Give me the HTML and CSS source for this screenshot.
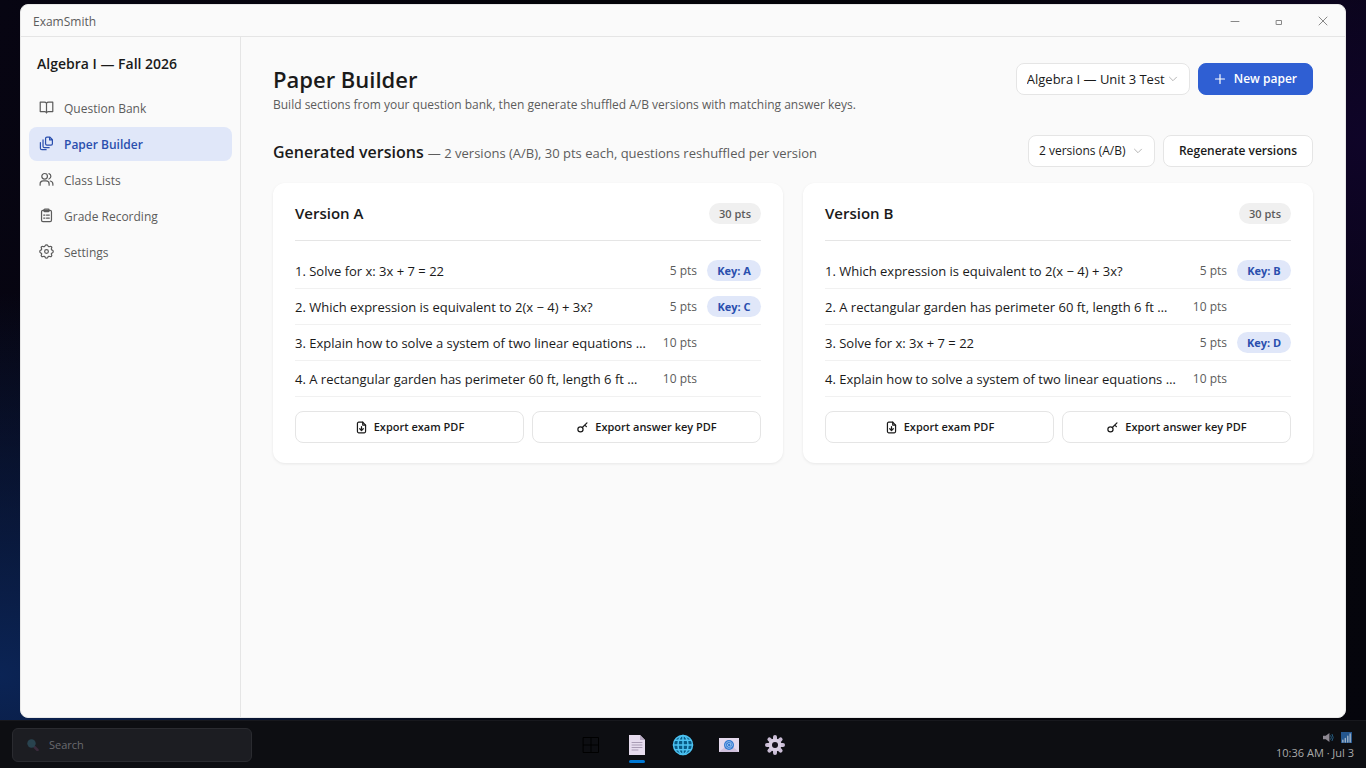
FILE: index.html
```html
<!DOCTYPE html>
<html lang="en">
<head>
<meta charset="utf-8">
<title>ExamSmith</title>
<link rel="stylesheet" href="styles.css">
</head>
<body class="desktop">
<svg class="sprite" aria-hidden="true">
  <symbol id="chevron" viewBox="0 0 10 10"><path d="M1.500 3.200 5 6.700l3.500-3.500"/></symbol>
  <symbol id="file-down" viewBox="0 0 16 16"><path d="M9.500 1.500h-5A1.500 1.500 0 0 0 3 3v10a1.500 1.500 0 0 0 1.500 1.500h7A1.500 1.500 0 0 0 13 13V5z"/><path d="M9.500 1.500V5H13M8 6.800v4.700M5.800 9.500 8 11.700l2.200-2.200"/></symbol>
  <symbol id="key" viewBox="0 0 16 16"><circle cx="5.500" cy="10.300" r="3.200"/><path d="M7.800 8 13.500 2.300M10.800 5l2 2"/></symbol>
</svg>
<div class="window">
  <header class="titlebar">
    <span class="titlebar-name">ExamSmith</span>
    <div class="titlebar-controls">
      <button class="win-button" type="button" aria-label="Minimize"><svg viewBox="0 0 12 12"><path d="M2 6.500h8"/></svg></button>
      <button class="win-button" type="button" aria-label="Maximize"><svg viewBox="0 0 12 12"><path d="M3.500 5.500h5v4h-5z"/></svg></button>
      <button class="win-button" type="button" aria-label="Close"><svg viewBox="0 0 12 12"><path d="m2 2 8 8M10 2l-8 8"/></svg></button>
    </div>
  </header>
  <div class="body">
    <nav class="sidebar" aria-label="Main">
      <div class="course">Algebra I — Fall 2026</div>
      <a class="nav-item" href="#"><svg viewBox="0 0 16 16"><path d="M8 3.500v10.300M8 3.500C7.500 2.700 6.700 2.300 5.700 2.300H1.300v10h4.900c.9 0 1.500.5 1.800 1.300.3-.8.900-1.300 1.800-1.300h4.900v-10h-4.400c-1 0-1.800.4-2.300 1.200z"/></svg>Question Bank</a>
      <a class="nav-item active" href="#" aria-current="page"><svg viewBox="0 0 16 16"><path d="M11.700 1.200H8.500c-.8 0-1.500.7-1.500 1.500v5.600c0 .8.700 1.500 1.500 1.500h4.300c.8 0 1.500-.7 1.500-1.500V3.800zM11.300 1.300v2.900h2.900M4.300 4.200v6.600c0 .9.700 1.600 1.600 1.600h4.900M1.500 7v6c0 .9.700 1.600 1.600 1.600h4.500"/></svg>Paper Builder</a>
      <a class="nav-item" href="#"><svg viewBox="0 0 16 16"><circle cx="6" cy="4.600" r="3"/><path d="M1.200 14v-1.300a3.300 3.300 0 0 1 3.300-3.300h3a3.300 3.300 0 0 1 3.300 3.300V14M10.600 1.800a3 3 0 0 1 0 5.700M12 9.600a3.300 3.300 0 0 1 2.800 3.200V14"/></svg>Class Lists</a>
      <a class="nav-item" href="#"><svg viewBox="0 0 16 16"><rect x="2.700" y="2.500" width="10.600" height="12" rx="1.500"/><rect x="5.300" y="1.200" width="5.400" height="2.700" rx=".8"/><path d="M5 7.500h1.300M5 10.700h1.300M8 7.500h3M8 10.700h3"/></svg>Grade Recording</a>
      <a class="nav-item" href="#"><svg viewBox="0 0 16 16"><path d="M6.600 1.800c.4-1.300 2.400-1.300 2.800 0 .3 1 1.300 1.300 2.200.9 1.300-.6 2.500.6 1.800 1.800-.5.900-.1 1.900.8 2.100 1.300.4 1.300 2.400 0 2.800-.9.200-1.300 1.200-.8 2.100.7 1.200-.5 2.400-1.800 1.800-.9-.4-1.900 0-2.200.9-.4 1.300-2.400 1.300-2.800 0-.3-.9-1.300-1.300-2.200-.9-1.300.6-2.500-.6-1.800-1.800.5-.9.100-1.900-.8-2.100-1.300-.4-1.300-2.400 0-2.800.9-.2 1.300-1.200.8-2.100-.7-1.200.5-2.400 1.800-1.800.9.400 1.900.1 2.200-.9z"/><circle cx="8" cy="8" r="2"/></svg>Settings</a>
    </nav>
    <main class="main">
      <div class="page-head">
        <div>
          <h1>Paper Builder</h1>
          <p class="subtitle">Build sections from your question bank, then generate shuffled A/B versions with matching answer keys.</p>
        </div>
        <div class="actions">
          <span class="select-wrap paper-select"><select aria-label="Paper"><option>Algebra I — Unit 3 Test</option></select><svg><use href="#chevron"/></svg></span>
          <button class="button primary" type="button"><svg viewBox="0 0 12 12"><path d="M6 1.500v9M1.500 6h9"/></svg>New paper</button>
        </div>
      </div>
      <div class="section-head">
        <h2>Generated versions <span class="section-note">— 2 versions (A/B), 30 pts each, questions reshuffled per version</span></h2>
        <div class="actions">
          <span class="select-wrap"><select aria-label="Number of versions"><option>2 versions (A/B)</option></select><svg><use href="#chevron"/></svg></span>
          <button class="button" type="button">Regenerate versions</button>
        </div>
      </div>
      <div class="cards">
        <section class="card">
          <div class="card-head"><h3>Version A</h3><span class="pill">30 pts</span></div>
          <ul class="questions">
            <li><span>1. Solve for x: 3x + 7 = 22</span><span class="pts">5 pts</span><span class="pill key">Key: A</span></li>
            <li><span>2. Which expression is equivalent to 2(x − 4) + 3x?</span><span class="pts">5 pts</span><span class="pill key">Key: C</span></li>
            <li><span>3. Explain how to solve a system of two linear equations …</span><span class="pts">10 pts</span></li>
            <li><span>4. A rectangular garden has perimeter 60 ft, length 6 ft …</span><span class="pts">10 pts</span></li>
          </ul>
          <div class="exports">
            <button class="button" type="button"><svg><use href="#file-down"/></svg>Export exam PDF</button>
            <button class="button" type="button"><svg><use href="#key"/></svg>Export answer key PDF</button>
          </div>
        </section>
        <section class="card">
          <div class="card-head"><h3>Version B</h3><span class="pill">30 pts</span></div>
          <ul class="questions">
            <li><span>1. Which expression is equivalent to 2(x − 4) + 3x?</span><span class="pts">5 pts</span><span class="pill key">Key: B</span></li>
            <li><span>2. A rectangular garden has perimeter 60 ft, length 6 ft …</span><span class="pts">10 pts</span></li>
            <li><span>3. Solve for x: 3x + 7 = 22</span><span class="pts">5 pts</span><span class="pill key">Key: D</span></li>
            <li><span>4. Explain how to solve a system of two linear equations …</span><span class="pts">10 pts</span></li>
          </ul>
          <div class="exports">
            <button class="button" type="button"><svg><use href="#file-down"/></svg>Export exam PDF</button>
            <button class="button" type="button"><svg><use href="#key"/></svg>Export answer key PDF</button>
          </div>
        </section>
      </div>
    </main>
  </div>
</div>
<footer class="taskbar">
  <label class="search"><svg viewBox="0 0 12 12"><path d="m7.500 8 3 3" stroke="#3a2a3c" stroke-width="2.500" stroke-linecap="round"/><circle cx="4.500" cy="4.500" r="4.200" fill="#29434f"/></svg><input type="text" placeholder="Search" aria-label="Search"></label>
  <div class="apps">
    <button class="app" type="button" aria-label="Start"><svg viewBox="0 0 22 22"><path d="M3.500 3.500h15v15h-15zM11 3.500v15M3.500 11h15" fill="none" stroke="#000"/></svg></button>
    <button class="app running" type="button" aria-label="ExamSmith"><svg viewBox="0 0 22 22"><path d="M3 1h11l5 5v15H3z" fill="#e6dcee"/><path d="M14 1v5h5z" fill="#b9abc4"/><path d="M6 8.500h10M6 11h10M6 13.500h10M6 16h6" stroke="#a99cb5"/></svg></button>
    <button class="app" type="button" aria-label="Browser"><svg viewBox="0 0 22 22"><circle cx="11" cy="11" r="9.500" fill="#075a85"/><g fill="none" stroke="#4cc2f1" stroke-width="1.500"><circle cx="11" cy="11" r="9.500"/><ellipse cx="11" cy="11" rx="5" ry="9.500"/><path d="M11 1.500v19M1.500 11h19M3 6.300h16M3 15.700h16"/></g></svg></button>
    <button class="app" type="button" aria-label="Mail"><svg viewBox="0 0 22 22"><path d="M1 4h20v14H1z" fill="#e4d9ed"/><path d="m1 18 7-6h6l7 6z" fill="#cfc0dc"/><circle cx="11" cy="11" r="5" fill="#3279d2"/><path d="M12.800 12.500c1 .7 1.600-.2 1.600-1.500a3.400 3.400 0 1 0-1.500 2.800M12.700 9.500v2.200a1.700 1.700 0 1 1 0-1.400" fill="none" stroke="#a9cbf3" stroke-width=".8"/></svg></button>
    <button class="app" type="button" aria-label="Settings"><svg viewBox="0 0 22 22"><g stroke="#cabdd6" stroke-width="4" stroke-linecap="round"><path d="M11 3v16M3 11h16M5.400 5.400l11.200 11.200M16.600 5.400 5.400 16.600"/></g><circle cx="11" cy="11" r="6.500" fill="#d9cee2"/><circle cx="11" cy="11" r="3" fill="#17131c"/></svg></button>
  </div>
  <div class="tray">
    <div class="tray-icons">
      <svg viewBox="0 0 12 12"><path d="M0 4h3l4-3v10L3 8H0z" fill="#8d8892"/><path d="M8.500 4q1.500 2 0 4M10 2.500q2.500 3.500 0 7" fill="none" stroke="#27628a"/></svg>
      <svg viewBox="0 0 12 12"><path d="M0 0h12v12H0z" fill="#24568e"/><path d="M2 11V9M4.700 11V7M7.400 11V4.500M10 11V2" stroke="#9fb2c7" stroke-width="1.500"/></svg>
    </div>
    <div>10:36 AM · Jul 3</div>
  </div>
</footer>
</body>
</html>
```
FILE: styles.css
```css
* { box-sizing: border-box; }
h1, h2, h3, p, ul { margin: 0; padding: 0; }
button, input, select { font: inherit; color: inherit; }
.desktop {
  margin: 0;
  height: 100vh;
  display: flex;
  flex-direction: column;
  font-family: "Open Sans", "Noto Sans", sans-serif;
  font-size: 13px;
  line-height: 20px;
  color: #1a1a1a;
  background:
    radial-gradient(ellipse 40% 50% at 0 88%, #0b2455, transparent),
    radial-gradient(ellipse 30% 50% at 100% 18%, #0f0428, transparent),
    linear-gradient(100deg, #070512, #030308 40%, #05050c);
}
.sprite { display: none; }
svg { fill: none; stroke-linecap: round; stroke-linejoin: round; flex: none; }
.window {
  flex: 1;
  min-height: 0;
  margin: 4px 20px 2px;
  display: flex;
  flex-direction: column;
  background: #fafafa;
  border: 1px solid #e8e8e8;
  border-radius: 8px;
  overflow: hidden;
}
.titlebar {
  height: 32px;
  flex: none;
  display: flex;
  justify-content: space-between;
  align-items: center;
  padding-left: 12px;
  border-bottom: 1px solid #e5e5e5;
  font-size: 12px;
  color: #5c5c5c;
}
.titlebar-name { padding-top: 2px; }
.titlebar-controls { display: flex; }
.win-button {
  width: 44px;
  height: 31px;
  display: grid;
  place-items: center;
  padding: 0;
  border: 0;
  background: none;
}
.win-button svg { width: 12px; height: 12px; stroke: #888; }
.body { flex: 1; display: flex; min-height: 0; }
.sidebar {
  width: 220px;
  flex: none;
  display: flex;
  flex-direction: column;
  gap: 2px;
  padding: 17px 8px;
  border-right: 1px solid #e5e5e5;
}
.course { padding: 0 8px; margin-bottom: 15px; font-size: 14px; font-weight: 600; }
.nav-item {
  height: 34px;
  display: flex;
  align-items: center;
  gap: 10px;
  padding: 1px 10px 0;
  border-radius: 8px;
  color: #5c5c5c;
  font-size: 12px;
  text-decoration: none;
}
.nav-item svg { width: 15px; height: 15px; margin-bottom: 2px; stroke: currentColor; stroke-width: 1.3; }
.nav-item.active { background: #e0e7f9; color: #2a4fae; font-weight: 600; }
.main { flex: 1; min-width: 0; padding: 26px 32px; }
.page-head, .section-head { display: flex; justify-content: space-between; align-items: flex-start; }
h1 { font-size: 22px; line-height: 32px; font-weight: 600; }
.subtitle { color: #5c5c5c; font-size: 12px; }
.actions { display: flex; gap: 8px; }
.button, .select-wrap select {
  height: 32px;
  border: 1px solid #e5e5e5;
  border-radius: 8px;
  background: #fff;
  font-size: 12px;
}
.button {
  display: flex;
  align-items: center;
  justify-content: center;
  gap: 6px;
  padding: 0 15px;
  font-weight: 600;
  white-space: nowrap;
}
.button svg { width: 13px; height: 13px; stroke: currentColor; stroke-width: 1.5; }
.button.primary { background: #2f5fd3; border-color: #2f5fd3; color: #fff; gap: 8px; }
.button.primary svg { width: 12px; height: 12px; stroke-width: 1.2; }
.select-wrap { position: relative; display: flex; }
.select-wrap select { width: 100%; appearance: none; padding: 0 28px 0 10px; }
.paper-select { min-width: 174px; }
.paper-select select { font-size: 13px; padding-right: 24px; }
.select-wrap svg {
  position: absolute;
  right: 12px;
  top: 11px;
  width: 10px;
  height: 10px;
  stroke: #b5b5b5;
  pointer-events: none;
}
.section-head { margin-top: 20px; align-items: center; }
h2 { padding-top: 2px; font-size: 16px; line-height: 24px; font-weight: 600; }
.section-note { font-size: 13px; font-weight: 400; color: #5c5c5c; }
.cards { display: grid; grid-template-columns: 1fr 1fr; gap: 20px; margin-top: 16px; }
.card {
  min-width: 0;
  padding: 20px 22px;
  background: #fff;
  border-radius: 12px;
  box-shadow: 0 1px 3px rgba(0, 0, 0, 0.08);
}
.card-head {
  display: flex;
  justify-content: space-between;
  align-items: center;
  padding-bottom: 16px;
  border-bottom: 1px solid #e5e5e5;
}
h3 { font-size: 15px; line-height: 21px; font-weight: 600; }
.pill {
  padding: 0 10px;
  border-radius: 11px;
  background: #f0f0f0;
  color: #5c5c5c;
  font-size: 11px;
  line-height: 21px;
  font-weight: 600;
  text-align: center;
  white-space: nowrap;
}
.pill.key { background: #e0e7f9; color: #2a4fae; padding: 0; font-weight: 700; }
.questions { list-style: none; padding-top: 12px; }
.questions li {
  height: 36px;
  display: grid;
  grid-template-columns: 1fr auto 54px;
  gap: 10px;
  align-items: center;
  border-bottom: 1px solid #f1f1f1;
  white-space: nowrap;
}
.pts { color: #5c5c5c; font-size: 12px; }
.exports { display: grid; grid-template-columns: 1fr 1fr; gap: 8px; margin-top: 14px; }
.exports .button { font-size: 11px; }
.taskbar {
  height: 48px;
  flex: none;
  display: grid;
  grid-template-columns: 1fr auto 1fr;
  align-items: center;
  padding: 1px 12px 0;
  background: #0d0e12;
  border-top: 1px solid #17181d;
  color: #aaa;
  font-size: 11px;
}
.search {
  width: 240px;
  height: 34px;
  display: flex;
  align-items: center;
  gap: 10px;
  padding: 0 14px;
  background: #1c1d22;
  border: 1px solid #2a2b30;
  border-radius: 6px;
}
.search svg { width: 12px; height: 12px; }
.search input { min-width: 0; flex: 1; padding: 0; border: 0; outline: 0; background: none; font-size: 11px; }
.search input::placeholder { color: #6a6b70; opacity: 1; }
.apps { display: flex; gap: 6px; }
.app {
  position: relative;
  width: 40px;
  height: 40px;
  display: grid;
  place-items: center;
  padding: 0;
  border: 0;
  background: none;
}
.app svg { width: 22px; height: 22px; }
.app.running::after {
  content: "";
  position: absolute;
  left: 12px;
  bottom: 2px;
  width: 16px;
  height: 3px;
  border-radius: 2px;
  background: #0078d4;
}
.tray { justify-self: end; text-align: right; line-height: 16px; }
.tray-icons { display: flex; justify-content: flex-end; gap: 7px; padding: 2px; }
.tray-icons svg { width: 11px; height: 11px; }
```
